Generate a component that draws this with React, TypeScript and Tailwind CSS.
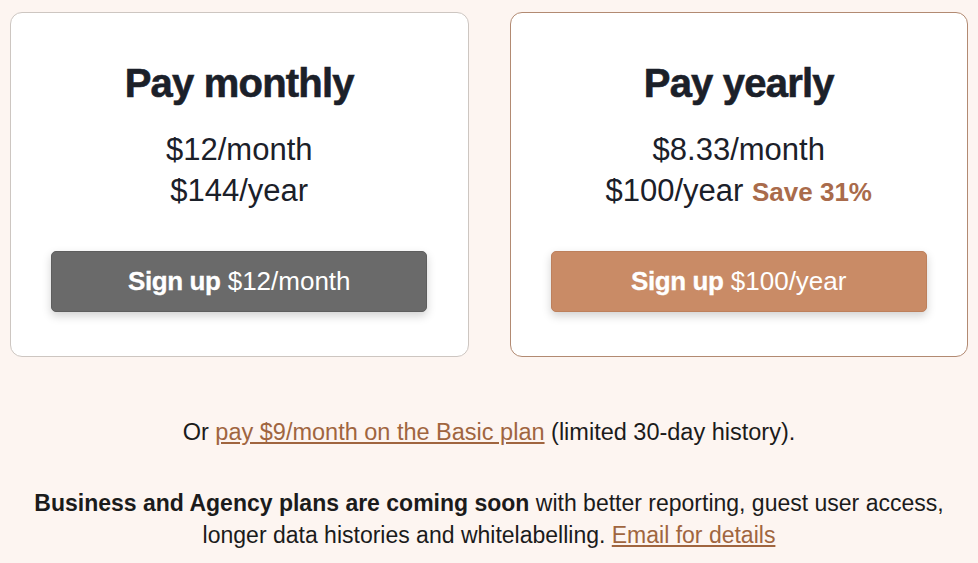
import React from "react"

const PlanCard = ({ title, lines, button, highlight }: { title: string; lines: React.ReactNode[]; button: React.ReactNode; highlight?: boolean }) => {
    return (
        <div className={`flex flex-col items-center rounded-xl border bg-white pt-[46px] pb-[44px] ${highlight ? "border-[#b28a72]" : "border-[#cdc6c1]"}`}>
            <h2 className="text-[40px] leading-[48px] font-bold tracking-[-0.8px] text-[#1b2029] [-webkit-text-stroke:0.6px_#1b2029]">{title}</h2>
            <div className="mt-[22px] flex flex-col items-center text-[31px] leading-[41px] text-[#1b2029]">
                {lines.map((l, i) => <div key={i} className="h-[41px]">{l}</div>)}
            </div>
            <button className={`mt-[40px] h-[61px] w-[376px] rounded-[5px] border text-[26px] text-white shadow-[0_4px_10px_rgba(0,0,0,0.18)] ${highlight ? "bg-[#c98b66] border-[#bd805c]" : "bg-[#6a6a6a] border-[#5e5e5e]"}`}>
                {button}
            </button>
        </div>
    )
}

export default function App() {
    return (
        <div className="min-h-[563px] bg-[#fdf5f1] px-[10px] pt-[12px]" style={{ fontFamily: '"Liberation Sans", Arial, sans-serif' }}>
            <div className="grid grid-cols-2 gap-[41px]">
                <PlanCard
                    title="Pay monthly"
                    lines={["$12/month", "$144/year"]}
                    button={<><span className="font-bold tracking-[-0.4px] [-webkit-text-stroke:0.3px_white]">Sign up</span> $12/month</>}
                />
                <PlanCard
                    highlight
                    title="Pay yearly"
                    lines={["$8.33/month", <>$100/year <span className="text-[26px] leading-none font-bold text-[#a96b4b]">Save 31%</span></>]}
                    button={<><span className="font-bold tracking-[-0.4px] [-webkit-text-stroke:0.3px_white]">Sign up</span> $100/year</>}
                />
            </div>
            <p className="mt-[59px] text-center text-[23.5px] leading-[32px] text-[#1b1b1b]">
                Or <a href="#" className="text-[#a0653f] underline underline-offset-2">pay $9/month on the Basic plan</a> (limited 30-day history).
            </p>
            <p className="mt-[39px] text-center text-[23px] leading-[32px] text-[#1b1b1b]">
                <span className="font-bold">Business and Agency plans are coming soon</span> with better reporting, guest user access,<br />
                longer data histories and whitelabelling. <a href="#" className="text-[#a0653f] underline underline-offset-2">Email for details</a>
            </p>
        </div>
    )
}
